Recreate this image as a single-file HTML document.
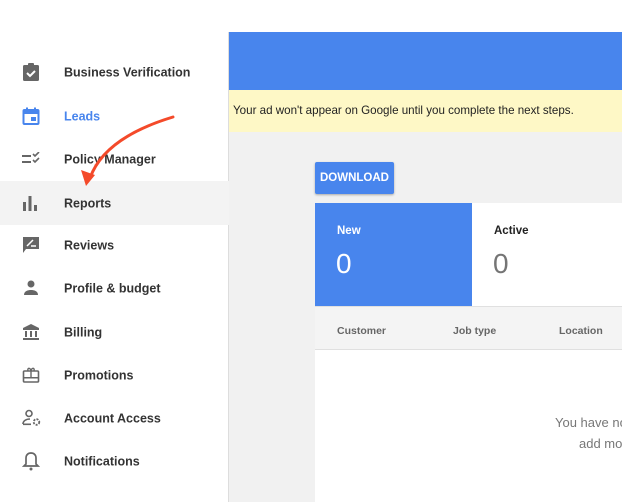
<!DOCTYPE html>
<html><head><style>
*{margin:0;padding:0;box-sizing:border-box}
body{width:622px;height:502px;overflow:hidden;background:#fff;font-family:"Liberation Sans",Arial,sans-serif;position:relative}
.side{position:absolute;left:0;top:32px;width:229px;height:470px;background:#fff;border-right:1px solid #ddd}
.item{position:absolute;left:0;width:229px;height:44px}
.item .t{position:absolute;left:64px;top:50%;transform:translateY(-45%);font-size:12.5px;font-weight:bold;color:#333}
.item svg{position:absolute;left:22px;top:50%;transform:translateY(-50%)}
.hl{background:#f3f3f3}
.abs{position:absolute}
</style></head><body>
<div class="abs" style="left:229px;top:32px;width:393px;height:58px;background:#4885ed"></div>
<div class="abs" style="left:229px;top:90px;width:393px;height:42px;background:#fef8c6"></div>
<div class="abs" style="left:233px;top:104px;font-size:11.6px;color:#222">Your ad won't appear on Google until you complete the next steps.</div>
<div class="abs" style="left:229px;top:132px;width:393px;height:370px;background:#f1f1f1"></div>
<div class="abs" style="left:315px;top:162px;width:79px;height:32px;background:#4885ed;border-radius:2px;box-shadow:0 1px 2px rgba(0,0,0,.3);color:#fff;font-size:11.5px;line-height:32px;text-align:center;font-weight:bold">DOWNLOAD</div>
<div class="abs" style="left:315px;top:203px;width:307px;height:299px;background:#fff"></div>
<div class="abs" style="left:315px;top:203px;width:157px;height:103px;background:#4885ed"></div>
<div class="abs" style="left:337px;top:225px;font-size:11.5px;color:#fff;font-weight:bold">New</div>
<div class="abs" style="left:336px;top:248px;font-size:28px;color:#fff">0</div>
<div class="abs" style="left:494px;top:225px;font-size:11.5px;color:#222;font-weight:bold">Active</div>
<div class="abs" style="left:493px;top:248px;font-size:28px;color:#757575">0</div>
<div class="abs" style="left:315px;top:306px;width:307px;height:44px;background:#f4f4f4;border-top:1px solid #e0e0e0;border-bottom:1px solid #e0e0e0"></div>
<div class="abs" style="left:337px;top:325px;font-size:10.5px;color:#666;font-weight:bold">Customer</div>
<div class="abs" style="left:453px;top:325px;font-size:10.5px;color:#666;font-weight:bold">Job type</div>
<div class="abs" style="left:559px;top:325px;font-size:10.5px;color:#666;font-weight:bold">Location</div>
<div class="abs" style="left:555px;top:415px;font-size:13px;color:#777;white-space:nowrap">You have no</div>
<div class="abs" style="left:579px;top:436px;font-size:13px;color:#777;white-space:nowrap">add mo</div>

<div class="side">
<div class="item" style="top:18px"><svg width="18" height="18" viewBox="0 0 18 18"><rect x="1" y="2" width="16" height="16" rx="1.5" fill="#666"/><rect x="6" y="0" width="6" height="4" rx="1" fill="#666"/><path d="M5 10l3 3 5-5" stroke="#fff" stroke-width="2" fill="none"/></svg><span class="t">Business Verification</span></div>
<div class="item" style="top:62px"><svg width="18" height="18" viewBox="0 0 18 18"><rect x="1.5" y="3" width="15" height="14" rx="1" fill="none" stroke="#4885ed" stroke-width="2"/><rect x="1.5" y="3" width="15" height="4" fill="#4885ed"/><rect x="4" y="0.5" width="2" height="3" fill="#4885ed"/><rect x="12" y="0.5" width="2" height="3" fill="#4885ed"/><rect x="9" y="10" width="5" height="4" fill="#4885ed"/></svg><span class="t" style="color:#4885ed">Leads</span></div>
<div class="item" style="top:105px"><svg width="20" height="14" viewBox="0 0 20 14"><rect x="0" y="3" width="9" height="2" fill="#666"/><rect x="0" y="9" width="9" height="2" fill="#666"/><path d="M11 2l2 2 4-4M11 8l2 2 4-4" stroke="#666" stroke-width="1.6" fill="none"/></svg><span class="t">Policy Manager</span></div>
<div class="item hl" style="top:149px"><svg width="16" height="16" viewBox="0 0 16 16"><rect x="1" y="7" width="3" height="9" fill="#666"/><rect x="6.5" y="1" width="3" height="15" fill="#666"/><rect x="12" y="10" width="3" height="6" fill="#666"/></svg><span class="t">Reports</span></div>
<div class="item" style="top:191px"><svg width="18" height="18" viewBox="0 0 18 18"><path d="M1 1h16v12H4l-3 4z" fill="#666"/><path d="M5 10l6-6M9 10h5" stroke="#fff" stroke-width="1.5"/></svg><span class="t">Reviews</span></div>
<div class="item" style="top:234px"><svg width="18" height="16" viewBox="0 0 18 16"><circle cx="9" cy="4" r="3.5" fill="#666"/><path d="M2 15c0-4 4-5 7-5s7 1 7 5z" fill="#666"/></svg><span class="t">Profile &amp; budget</span></div>
<div class="item" style="top:278px"><svg width="18" height="18" viewBox="0 0 18 18"><path d="M9 1l8 4v2H1V5z" fill="#666"/><rect x="3" y="8" width="2" height="6" fill="#666"/><rect x="8" y="8" width="2" height="6" fill="#666"/><rect x="13" y="8" width="2" height="6" fill="#666"/><rect x="1" y="15" width="16" height="2" fill="#666"/></svg><span class="t">Billing</span></div>
<div class="item" style="top:321px"><svg width="18" height="18" viewBox="0 0 18 18"><rect x="1.5" y="5" width="15" height="11" rx="1" fill="none" stroke="#666" stroke-width="1.6"/><rect x="1.5" y="11" width="15" height="1.5" fill="#666"/><path d="M6 5c-1-3 2-4 3 0 1-4 4-3 3 0M9 5v6" stroke="#666" stroke-width="1.4" fill="none"/></svg><span class="t">Promotions</span></div>
<div class="item" style="top:364px"><svg width="20" height="18" viewBox="0 0 20 18"><circle cx="7" cy="4.5" r="3" fill="none" stroke="#666" stroke-width="1.6"/><path d="M1 15c0-3 3-5 7-5" stroke="#666" stroke-width="1.6" fill="none"/><rect x="1" y="14.5" width="8" height="1.6" fill="#666"/><circle cx="14.5" cy="13" r="2.8" fill="none" stroke="#666" stroke-width="1.8" stroke-dasharray="2 1.2"/></svg><span class="t">Account Access</span></div>
<div class="item" style="top:407px"><svg width="18" height="20" viewBox="0 0 18 20"><path d="M9 2c-3 0-5 2-5 5v6l-2 2h14l-2-2V7c0-3-2-5-5-5z" fill="none" stroke="#666" stroke-width="1.7"/><circle cx="9" cy="18" r="1.5" fill="#666"/></svg><span class="t">Notifications</span></div>
</div>
<svg class="abs" style="left:0;top:0" width="622" height="502"><path d="M173 117C130 130 100 150 90 178" stroke="#f44a2a" stroke-width="3" fill="none" stroke-linecap="round"/><path d="M86 186l-5-16 14 5z" fill="#f44a2a"/></svg>
</body></html>
